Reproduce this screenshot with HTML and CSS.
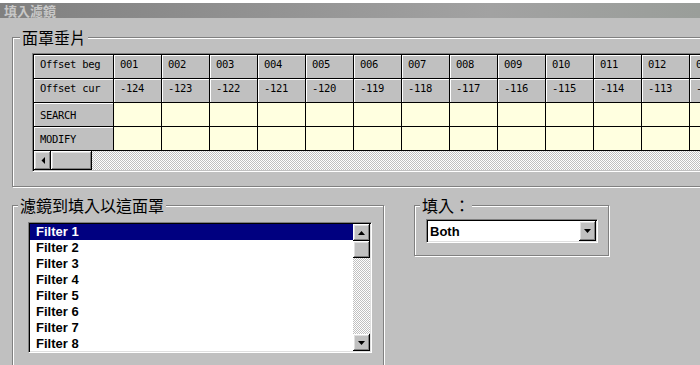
FILE: index.html
```html
<!DOCTYPE html>
<html lang="zh-Hant">
<head>
  <meta charset="UTF-8">
  <meta name="viewport" content="width=device-width, initial-scale=1.0">
  <title>填入濾鏡</title>
  <link rel="stylesheet" href="styles.css">
</head>
<body>
  <div class="window">
    <div class="top-strip"></div>
    <div class="titlebar">填入濾鏡</div>

    <div class="content">
      <div class="group group-mask">
        <span class="legend">面罩垂片</span>
        <div class="grid-frame">
          <div class="grid">
            <div class="cell head label top">Offset beg</div>
            <div class="cell head top">001</div>
            <div class="cell head top">002</div>
            <div class="cell head top">003</div>
            <div class="cell head top">004</div>
            <div class="cell head top">005</div>
            <div class="cell head top">006</div>
            <div class="cell head top">007</div>
            <div class="cell head top">008</div>
            <div class="cell head top">009</div>
            <div class="cell head top">010</div>
            <div class="cell head top">011</div>
            <div class="cell head top">012</div>
            <div class="cell head top">013</div>

            <div class="cell head label top">Offset cur</div>
            <div class="cell head top">-124</div>
            <div class="cell head top">-123</div>
            <div class="cell head top">-122</div>
            <div class="cell head top">-121</div>
            <div class="cell head top">-120</div>
            <div class="cell head top">-119</div>
            <div class="cell head top">-118</div>
            <div class="cell head top">-117</div>
            <div class="cell head top">-116</div>
            <div class="cell head top">-115</div>
            <div class="cell head top">-114</div>
            <div class="cell head top">-113</div>
            <div class="cell head top">-112</div>

            <div class="cell head label mid">SEARCH</div>
            <div class="cell input"></div>
            <div class="cell input"></div>
            <div class="cell input"></div>
            <div class="cell input"></div>
            <div class="cell input"></div>
            <div class="cell input"></div>
            <div class="cell input"></div>
            <div class="cell input"></div>
            <div class="cell input"></div>
            <div class="cell input"></div>
            <div class="cell input"></div>
            <div class="cell input"></div>
            <div class="cell input"></div>

            <div class="cell head label mid">MODIFY</div>
            <div class="cell input"></div>
            <div class="cell input"></div>
            <div class="cell input"></div>
            <div class="cell input"></div>
            <div class="cell input"></div>
            <div class="cell input"></div>
            <div class="cell input"></div>
            <div class="cell input"></div>
            <div class="cell input"></div>
            <div class="cell input"></div>
            <div class="cell input"></div>
            <div class="cell input"></div>
            <div class="cell input"></div>
          </div>
          <div class="hscroll">
            <div class="btn3d arrow-btn">
              <svg width="4" height="7" viewBox="0 0 4 7"><polygon points="4,0 4,7 0.5,3.5" fill="#000"/></svg>
            </div>
            <div class="btn3d hthumb"></div>
            <div class="track"></div>
          </div>
        </div>
      </div>

      <div class="lower">
        <div class="group group-filter">
          <span class="legend">濾鏡到填入以這面罩</span>
          <div class="listbox">
            <ul class="items">
              <li class="selected">Filter 1</li>
              <li>Filter 2</li>
              <li>Filter 3</li>
              <li>Filter 4</li>
              <li>Filter 5</li>
              <li>Filter 6</li>
              <li>Filter 7</li>
              <li>Filter 8</li>
            </ul>
            <div class="vscroll">
              <div class="btn3d arrow-btn">
                <svg width="7" height="4" viewBox="0 0 7 4"><polygon points="3.5,0 7,4 0,4" fill="#000"/></svg>
              </div>
              <div class="btn3d vthumb"></div>
              <div class="track"></div>
              <div class="btn3d arrow-btn">
                <svg width="7" height="4" viewBox="0 0 7 4"><polygon points="0,0 7,0 3.5,4" fill="#000"/></svg>
              </div>
            </div>
          </div>
        </div>

        <div class="group group-fill">
          <span class="legend">填入：</span>
          <div class="combo">
            <span class="combo-value">Both</span>
            <div class="btn3d arrow-btn combo-btn">
              <svg width="7" height="4" viewBox="0 0 7 4"><polygon points="0,0 7,0 3.5,4" fill="#000"/></svg>
            </div>
          </div>
        </div>
      </div>
    </div>
  </div>
</body>
</html>
```

FILE: styles.css
```css
body {
  margin: 0;
  background: #c0c0c0;
}
.window {
  width: 700px;
  height: 365px;
  overflow: hidden;
  background: #c0c0c0;
  font-family: "Noto Sans CJK TC", "Liberation Sans", sans-serif;
}
.top-strip {
  height: 3px;
  background: #fff;
}
.titlebar {
  height: 15px;
  line-height: 15px;
  padding-left: 4px;
  font-size: 13px;
  font-weight: bold;
  color: #c8c8c8;
  background: linear-gradient(to right, #808080, #a2a2a2 70%, #9a9e9a);
}
.content {
  padding: 19px 0 0 12px;
}

/* group boxes (etched frame) */
.group {
  position: relative;
  box-sizing: border-box;
  border: 1px solid #808080;
  box-shadow: 1px 1px 0 #fff, inset 1px 1px 0 #fff;
}
.legend {
  position: absolute;
  top: -9px;
  left: 5px;
  padding: 0 2px;
  font-size: 16px;
  line-height: 16px;
  color: #000;
  background: #c0c0c0;
  white-space: nowrap;
}
.group-mask {
  width: 760px;
  padding: 15px 0 14px 19px;
}
.group-mask .legend {
  left: 7px;
}

/* grid */
.grid-frame {
  border-top: 1px solid #808080;
  border-left: 1px solid #808080;
  border-bottom: 1px solid #fff;
  box-shadow: inset 1px 1px 0 #000;
  padding: 1px 0 1px 1px;
  background: #c0c0c0;
}
.grid {
  display: grid;
  grid-template-columns: 80px repeat(13, 48px);
  grid-auto-rows: 24px;
}
.cell {
  box-sizing: border-box;
  border-right: 1px solid #000;
  border-bottom: 1px solid #000;
  font-family: "DejaVu Sans Mono", monospace;
  font-size: 10.5px;
  letter-spacing: -0.3px;
  line-height: 12px;
  color: #000;
  padding-left: 6px;
  white-space: nowrap;
}
.cell.head {
  background: #c0c0c0;
  box-shadow: inset 1px 1px 0 #fff;
}
.cell.top {
  padding-top: 3px;
}
.cell.mid {
  padding-top: 6px;
}
.cell.input {
  background: #ffffe0;
}

/* scrollbars */
.btn3d {
  box-sizing: border-box;
  background: #c0c0c0;
  box-shadow: inset -1px -1px 0 #000, inset 1px 1px 0 #fff, inset -2px -2px 0 #808080, inset 2px 2px 0 #dfdfdf;
}
.arrow-btn {
  display: flex;
  align-items: center;
  justify-content: center;
}
.track {
  flex: 1;
  background: repeating-conic-gradient(#c0c0c0 0 25%, #fff 0 50%);
  background-size: 2px 2px;
}
.hscroll {
  display: flex;
  height: 19px;
}
.hscroll .arrow-btn {
  width: 17px;
}
.hthumb {
  width: 41px;
}

/* list box */
.lower {
  display: flex;
  align-items: flex-start;
  gap: 30px;
  margin-top: 18px;
}
.group-filter {
  width: 372px;
  height: 200px;
  padding: 16px 0 0 15px;
}
.group-filter .legend {
  left: 5px;
}
.listbox {
  display: flex;
  width: 344px;
  height: 131px;
  box-sizing: border-box;
  border-top: 1px solid #808080;
  border-left: 1px solid #808080;
  border-right: 1px solid #fff;
  border-bottom: 1px solid #fff;
  box-shadow: inset 1px 1px 0 #000, inset -1px -1px 0 #dfdfdf;
  padding: 1px;
  background: #fff;
}
.items {
  flex: 1;
  margin: 0;
  padding: 0;
  list-style: none;
  overflow: hidden;
}
.items li {
  height: 16px;
  line-height: 16px;
  padding-left: 6px;
  font-family: "Liberation Sans", Arial, sans-serif;
  font-size: 13px;
  font-weight: bold;
  color: #000;
}
.items li.selected {
  background: #000080;
  color: #fff;
}
.vscroll {
  display: flex;
  flex-direction: column;
  width: 17px;
}
.vscroll .arrow-btn {
  height: 17px;
}
.vthumb {
  height: 17px;
}

/* combo */
.group-fill {
  width: 195px;
  padding: 13px 0 12px 11px;
}
.combo {
  display: flex;
  align-items: center;
  width: 172px;
  height: 24px;
  box-sizing: border-box;
  border-top: 1px solid #808080;
  border-left: 1px solid #808080;
  border-right: 1px solid #fff;
  border-bottom: 1px solid #fff;
  box-shadow: inset 1px 1px 0 #000, inset -1px -1px 0 #dfdfdf;
  padding: 1px;
  background: #fff;
}
.combo-value {
  flex: 1;
  padding-left: 2px;
  font-family: "Liberation Sans", Arial, sans-serif;
  font-size: 13px;
  font-weight: bold;
  color: #000;
}
.combo-btn {
  width: 17px;
  height: 20px;
}
```
